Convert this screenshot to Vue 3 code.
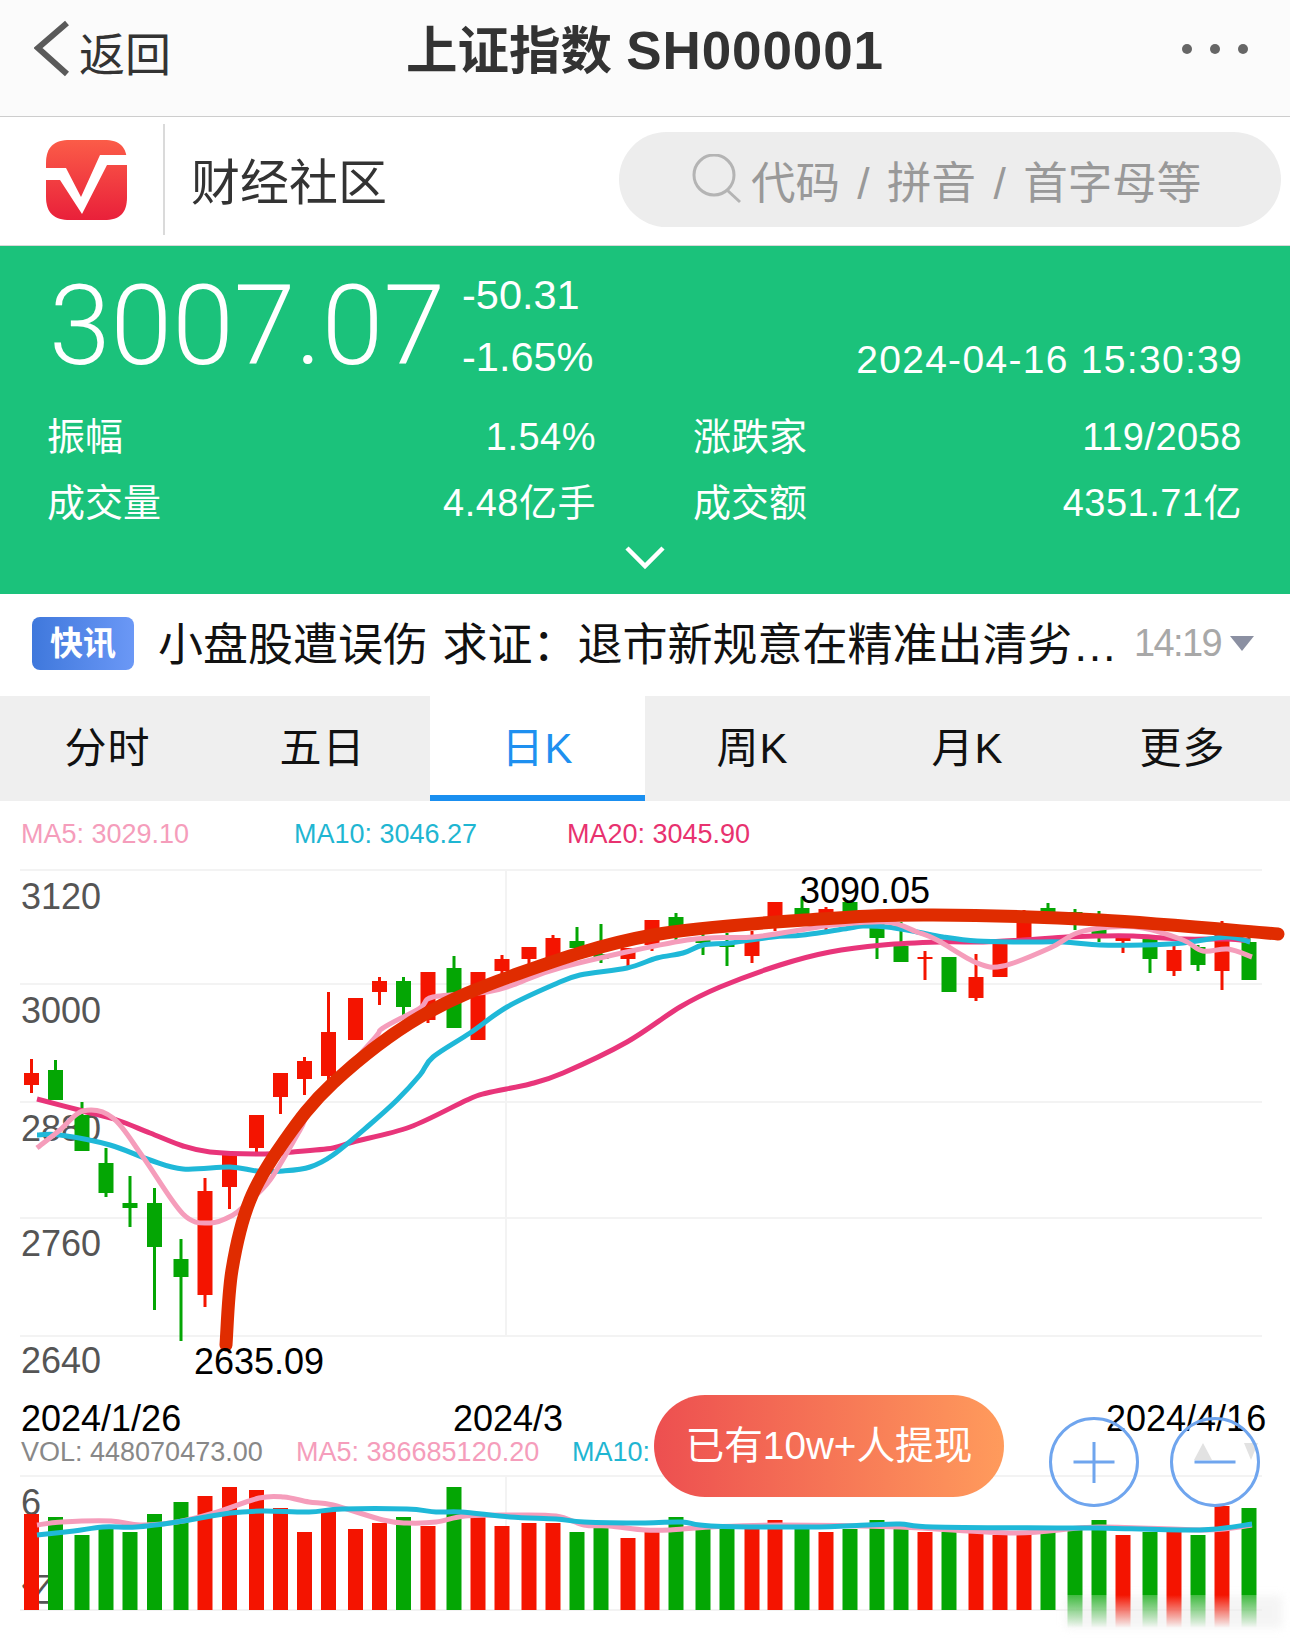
<template>
  <div class="page">
    <header class="nav">
      <div class="nav-side back">
        <svg width="36" height="60" viewBox="0 0 36 60" fill="none">
          <path d="M33 4L4 29l29 26" stroke="#5a5a5a" stroke-width="6"/>
        </svg>
        <span>返回</span>
      </div>
      <div class="nav-title">上证指数 <span class="code">SH000001</span></div>
      <div class="nav-side more"><i></i><i></i><i></i></div>
    </header>

    <div class="community">
      <svg class="logo" width="82" height="81" viewBox="46 140 82 81">
        <defs>
          <linearGradient id="logoFill" x1="0" y1="0" x2="0" y2="1">
            <stop offset="0" stop-color="#fb5c48"/>
            <stop offset="1" stop-color="#e9203a"/>
          </linearGradient>
        </defs>
        <path d="M70 140h34c16 0 23 7 23 23v34c0 16-7 23-23 23H70c-16 0-24-7-24-23v-34c0-16 8-23 24-23z" fill="url(#logoFill)"/>
        <path d="M46 168h20l15 29 19-42h27v10h-20l-25 49-22-34H46z" fill="#fff"/>
      </svg>
      <div class="divider"></div>
      <div class="community-name">财经社区</div>
      <div class="search">
        <svg width="50" height="50" viewBox="0 0 50 50" fill="none">
          <circle cx="22" cy="21" r="20" stroke="#b4b4b4" stroke-width="3"/>
          <path d="M35 36l13 12" stroke="#b4b4b4" stroke-width="3"/>
        </svg>
        <span>代码 / 拼音 / 首字母等</span>
      </div>
    </div>

    <section class="quote">
      <div class="quote-top">
        <div class="price">3007.07</div>
        <div class="change">
          <div>-50.31</div>
          <div>-1.65%</div>
        </div>
        <div class="time">2024-04-16 15:30:39</div>
      </div>
      <div class="stats">
        <div v-for="s in stats" :key="s.label" class="stat">
          <span>{{ s.label }}</span>
          <span class="stat-value">{{ s.value }}</span>
        </div>
      </div>
      <svg class="chevron" width="40" height="24" viewBox="0 0 40 24" fill="none">
        <path d="M2 2l18 18L38 2" stroke="#fff" stroke-width="4.5"/>
      </svg>
    </section>

    <div class="news">
      <span class="news-tag">快讯</span>
      <span class="news-text">小盘股遭误伤 求证：退市新规意在精准出清劣…</span>
      <span class="news-time">14:19</span>
      <i class="news-arrow"></i>
    </div>

    <nav class="tabs">
      <div v-for="t in tabs" :key="t" class="tab" :class="{ active: t === '日K' }">{{ t }}</div>
    </nav>

    <svg class="chart" width="1290" height="842" viewBox="0 801 1290 842">
      <defs>
        <linearGradient id="fadeRed" x1="0" y1="0" x2="0" y2="1">
          <stop offset="0" stop-color="#f41400"/>
          <stop offset="1" stop-color="#f41400" stop-opacity="0"/>
        </linearGradient>
        <linearGradient id="fadeGreen" x1="0" y1="0" x2="0" y2="1">
          <stop offset="0" stop-color="#04a604" stop-opacity=".75"/>
          <stop offset="1" stop-color="#04a604" stop-opacity="0"/>
        </linearGradient>
        <filter id="haze" x="-10%" y="-50%" width="120%" height="200%">
          <feGaussianBlur stdDeviation="4"/>
        </filter>
      </defs>

      <text class="ma" x="21" y="843" fill="#f59dbb">MA5: 3029.10</text>
      <text class="ma" x="294" y="843" fill="#1fb6d2">MA10: 3046.27</text>
      <text class="ma" x="567" y="843" fill="#e8326f">MA20: 3045.90</text>

      <!-- grid -->
      <path v-for="y in gridY" :key="y" :d="`M20 ${y}H1262`" stroke="#f3f3f3" stroke-width="2"/>
      <path d="M506 870V1336M506 1476V1610" stroke="#f3f3f3" stroke-width="2"/>

      <text v-for="a in axis" :key="a.t" class="axis" x="21" :y="a.y">{{ a.t }}</text>

      <!-- candles -->
      <g v-for="c in candles" :key="c.x" :fill="c.up ? '#f41400' : '#04a604'">
        <rect :x="c.x - 1.5" :y="c.hi" width="3" :height="c.lo - c.hi"/>
        <rect :x="c.x - 7.5" :y="c.top" width="15" :height="c.bot - c.top"/>
      </g>

      <path :d="ma20" class="line" stroke="#e8357a"/>
      <path :d="ma10" class="line" stroke="#1fb8d8"/>
      <path :d="ma5" class="line" stroke="#f59dbb"/>
      <path :d="arc" fill="none" stroke="#e02c00" stroke-width="13" stroke-linecap="round"/>

      <text class="mark" x="800" y="903">3090.05</text>
      <text class="mark" x="194" y="1374">2635.09</text>
      <text class="mark" x="21" y="1431">2024/1/26</text>
      <text class="mark" x="453" y="1431">2024/3</text>
      <text class="mark" x="1106" y="1431">2024/4/16</text>

      <text class="ma" x="21" y="1461" fill="#888">VOL: 448070473.00</text>
      <text class="ma" x="296" y="1461" fill="#f59dbb">MA5: 386685120.20</text>
      <text class="ma" x="572" y="1461" fill="#1fb6d2">MA10:</text>

      <text class="axis" x="21" y="1515">6</text>
      <text class="axis" x="21" y="1602">亿</text>

      <!-- volume -->
      <rect x="1066" y="1596" width="216" height="32" fill="#ececec" opacity=".55" filter="url(#haze)"/>
      <g v-for="b in bars" :key="b.x">
        <rect :x="b.x - 7.5" :y="b.top" width="15" :height="b.fade ? 1595 - b.top : 1610 - b.top" :fill="b.up ? '#f41400' : '#04a604'"/>
        <rect v-if="b.fade" :x="b.x - 7.5" y="1595" width="15" height="33" :fill="b.up ? 'url(#fadeRed)' : 'url(#fadeGreen)'"/>
      </g>
      <path :d="volMa5" class="line" stroke="#f59dbb"/>
      <path :d="volMa10" class="line" stroke="#1fb8d8"/>

      <!-- zoom buttons, sort arrows under the minus ring -->
      <path d="M1203 1443l9 17h-18zM1244 1443h14l-7 17z" fill="#e2e2e2"/>
      <g fill="none" stroke="#6fa5ee" stroke-width="3">
        <circle cx="1094" cy="1462" r="43.5"/>
        <circle cx="1215" cy="1462" r="43.5"/>
        <path d="M1073.500 1462h41M1094 1442v41M1194.500 1462h41"/>
      </g>
    </svg>

    <div class="withdraw">已有10w+人提现</div>
  </div>
</template>

<script setup>
const stats = [
  { label: '振幅', value: '1.54%' },
  { label: '涨跌家', value: '119/2058' },
  { label: '成交量', value: '4.48亿手' },
  { label: '成交额', value: '4351.71亿' },
]
const tabs = ['分时', '五日', '日K', '周K', '月K', '更多']

const gridY = [870, 984, 1102, 1218, 1336, 1476, 1610]
const axis = [
  { t: '3120', y: 909 },
  { t: '3000', y: 1023 },
  { t: '2880', y: 1141 },
  { t: '2760', y: 1256 },
  { t: '2640', y: 1373 },
]

// x, wick top, body top, body bottom, wick bottom, up, volume top
const raw = [
  [31.5, 1059, 1073, 1085, 1093, 1, 1514],
  [55.5, 1060, 1070, 1100, 1100, 0, 1517],
  [82, 1102, 1115, 1151, 1151, 0, 1535],
  [106, 1148, 1163, 1193, 1197, 0, 1527],
  [130, 1176, 1203, 1208, 1227, 0, 1532],
  [154.5, 1188, 1203, 1247, 1310, 0, 1514],
  [181, 1239, 1259, 1277, 1341, 0, 1502],
  [205, 1178, 1191, 1295, 1307, 1, 1496],
  [229.5, 1152, 1152, 1187, 1209, 1, 1487],
  [256.5, 1115, 1115, 1148, 1153, 1, 1490],
  [280.5, 1073, 1073, 1097, 1114, 1, 1508],
  [304.5, 1057, 1061, 1079, 1095, 1, 1532],
  [328.5, 992, 1032, 1076, 1085, 1, 1511],
  [355.5, 998, 998, 1040, 1040, 1, 1529],
  [379.5, 977, 981, 992, 1005, 1, 1523],
  [403.5, 977, 981, 1007, 1017, 0, 1517],
  [428, 972, 972, 1020, 1023, 1, 1526],
  [454, 956, 968, 1028, 1028, 0, 1487],
  [478, 972, 972, 1040, 1040, 1, 1517],
  [502, 955, 959, 971, 975, 1, 1526],
  [529, 947, 947, 959, 967, 1, 1523],
  [553, 935, 938, 960, 960, 1, 1523],
  [577, 927, 941, 948, 950, 0, 1532],
  [601, 924, 954, 959, 963, 0, 1527],
  [628, 948, 948, 959, 966, 1, 1538],
  [652, 920, 920, 945, 951, 1, 1532],
  [676, 913, 917, 930, 941, 0, 1517],
  [703, 933, 937, 943, 955, 0, 1529],
  [727, 933, 944, 947, 966, 0, 1529],
  [752, 931, 937, 956, 963, 1, 1529],
  [775, 902, 902, 928, 931, 1, 1520],
  [802, 897, 908, 922, 922, 0, 1523],
  [826, 907, 909, 927, 930, 1, 1532],
  [850, 902, 902, 925, 925, 0, 1529],
  [877, 915, 915, 938, 959, 0, 1520],
  [901, 922, 946, 962, 962, 0, 1527],
  [925, 951, 957, 959, 980, 1, 1532],
  [949, 957, 957, 992, 992, 0, 1532],
  [976, 954, 977, 998, 1001, 1, 1532],
  [1000, 944, 944, 977, 977, 1, 1535],
  [1024, 910, 918, 938, 938, 1, 1532],
  [1048, 903, 908, 920, 923, 0, 1527],
  [1075, 909, 912, 922, 930, 0, 1530],
  [1099, 911, 928, 936, 942, 0, 1520],
  [1123, 935, 938, 941, 953, 1, 1535],
  [1150, 938, 938, 959, 973, 0, 1532],
  [1174, 945, 950, 971, 976, 1, 1532],
  [1198, 945, 947, 965, 971, 0, 1535],
  [1222, 921, 934, 971, 990, 1, 1506],
  [1249, 937, 942, 980, 980, 0, 1508],
]
const candles = raw.map(([x, hi, top, bot, lo, up]) => ({ x, hi, top, bot, lo, up }))
const bars = raw.map((r) => ({ x: r[0], up: r[5], top: r[6], fade: r[0] >= 1075 }))

// catmull-rom through the traced points
function smooth(pts) {
  let d = `M${pts[0][0]} ${pts[0][1]}`
  for (let i = 0; i < pts.length - 1; i++) {
    const p0 = pts[i - 1] || pts[i]
    const p1 = pts[i]
    const p2 = pts[i + 1]
    const p3 = pts[i + 2] || p2
    const c1x = p1[0] + (p2[0] - p0[0]) / 6
    const c1y = p1[1] + (p2[1] - p0[1]) / 6
    const c2x = p2[0] - (p3[0] - p1[0]) / 6
    const c2y = p2[1] - (p3[1] - p1[1]) / 6
    d += `C${c1x.toFixed(1)} ${c1y.toFixed(1)} ${c2x.toFixed(1)} ${c2y.toFixed(1)} ${p2[0]} ${p2[1]}`
  }
  return d
}

const arc = smooth([
  [226, 1345], [232, 1270], [250, 1200], [283, 1143], [333, 1083], [420, 1017],
  [520, 973], [653, 935], [820, 919], [933, 915], [1100, 920], [1278, 934],
])
const ma5 = smooth([
  [37, 1148], [60, 1130], [83, 1111], [113, 1118], [143, 1157], [183, 1214], [210, 1223],
  [233, 1215], [245, 1205], [270, 1180], [300, 1130], [313, 1107], [373, 1040], [383, 1028],
  [420, 1008], [433, 997], [487, 992], [513, 985], [563, 967], [687, 940], [753, 937],
  [813, 928], [833, 925], [887, 922], [917, 932], [937, 940], [977, 963], [1003, 966],
  [1050, 948], [1077, 933], [1110, 927], [1143, 928], [1183, 940], [1203, 951], [1228, 949], [1252, 957],
])
const ma10 = smooth([
  [37, 1135], [60, 1135], [110, 1145], [150, 1160], [183, 1169], [230, 1167], [257, 1171],
  [283, 1171], [310, 1167], [333, 1155], [367, 1127], [397, 1100], [420, 1075], [433, 1057],
  [470, 1033], [507, 1007], [553, 985], [580, 975], [627, 968], [657, 958], [683, 953],
  [703, 945], [730, 943], [773, 937], [803, 935], [850, 928], [863, 926], [887, 927],
  [917, 932], [943, 937], [977, 941], [1023, 942], [1063, 942], [1100, 945], [1143, 945],
  [1183, 943], [1227, 937], [1250, 942],
])
const ma20 = smooth([
  [37, 1099], [83, 1111], [117, 1120], [150, 1133], [183, 1146], [210, 1152], [260, 1154],
  [293, 1152], [333, 1148], [353, 1142], [410, 1127], [467, 1100], [487, 1093], [530, 1084],
  [563, 1073], [627, 1042], [680, 1007], [720, 987], [780, 965], [830, 952], [883, 945],
  [940, 942], [983, 942], [1023, 940], [1067, 937], [1100, 936], [1133, 936], [1183, 939],
  [1227, 939], [1250, 941],
])
const volMa5 = smooth([
  [37, 1525], [62, 1522], [111, 1521], [140, 1525], [177, 1522], [214, 1513], [259, 1498],
  [284, 1497], [309, 1502], [333, 1505], [383, 1520], [407, 1523], [436, 1522], [465, 1516],
  [510, 1515], [556, 1516], [584, 1525], [609, 1526], [645, 1530], [670, 1530], [711, 1527],
  [781, 1525], [900, 1527], [1015, 1533], [1098, 1527], [1205, 1530], [1252, 1525],
])
const volMa10 = smooth([
  [37, 1535], [74, 1531], [103, 1527], [136, 1527], [177, 1522], [230, 1513], [263, 1511],
  [309, 1512], [342, 1509], [407, 1509], [436, 1512], [461, 1512], [510, 1517], [556, 1519],
  [584, 1522], [645, 1523], [682, 1522], [711, 1526], [810, 1527], [867, 1525], [900, 1524],
  [933, 1527], [1057, 1528], [1098, 1528], [1200, 1530], [1252, 1524],
])
</script>

<style scoped>
.page {
  position: relative;
  width: 1290px;
  height: 1643px;
  overflow: hidden;
  background: #fff;
  font-family: "Liberation Sans", "Noto Sans CJK SC", sans-serif;
}

/* Nav */
.nav {
  display: flex;
  align-items: center;
  height: 117px;
  padding-bottom: 18px;
  box-sizing: border-box;
  background: #fbfbfb;
  border-bottom: 1px solid #cdcdcd;
}

.nav-side {
  width: 300px;
  flex-shrink: 0;
  display: flex;
  align-items: center;
}

.back {
  padding-left: 34px;
  box-sizing: border-box;
  gap: 9px;
  font-size: 46px;
  color: #333;
}

.back span {
  margin-top: 4px;
}

.nav-title {
  flex: 1;
  margin-bottom: 5px;
  text-align: center;
  font-size: 51.500px;
  font-weight: 700;
  color: #333;
}

.code {
  font-size: 53px;
  letter-spacing: 0.9px;
}

.more {
  justify-content: flex-end;
  gap: 18px;
  padding-right: 42px;
  box-sizing: border-box;
}

.more i {
  width: 10px;
  height: 10px;
  border-radius: 50%;
  background: #666;
}

/* Community bar */
.community {
  display: flex;
  align-items: center;
  height: 129px;
  padding: 0 0 4px 46px;
  border-bottom: 1px solid #d8d8d8;
  box-sizing: border-box;
}

.logo {
  flex-shrink: 0;
  margin-top: 3px;
}

.divider {
  width: 2px;
  height: 111px;
  margin: 0 26px 0 35px;
  background: #dadada;
}

.community-name {
  font-size: 49px;
  color: #333;
  width: 428px;
  margin-bottom: 2px;
}

.search {
  display: flex;
  align-items: center;
  width: 662px;
  height: 95px;
  padding-left: 73px;
  box-sizing: border-box;
  gap: 9px;
  border-radius: 48px;
  background: #ededed;
  font-size: 44.500px;
  color: #999;
  word-spacing: 5px;
}

/* Quote */
.quote {
  height: 348px;
  padding: 18px 47px 0 47px;
  box-sizing: border-box;
  background: #1bc27b;
  color: #fff;
  display: flex;
  flex-direction: column;
}

.quote-top {
  display: flex;
  height: 124px;
}

.price {
  width: 392px;
  margin-left: 2px;
  font-family: Roboto, "Liberation Sans", sans-serif;
  font-size: 111px;
  font-weight: 300;
  line-height: 124px;
  white-space: nowrap;
}

.change {
  margin-left: 21px;
  font-size: 41.500px;
  line-height: 62px;
}

.time {
  margin-left: auto;
  align-self: flex-end;
  position: relative;
  top: 3px;
  font-size: 39px;
  line-height: 62px;
  letter-spacing: 1.3px;
}

.stats {
  display: grid;
  grid-template-columns: 549px 549px;
  column-gap: 97px;
  margin-top: 16px;
}

.stat {
  display: flex;
  justify-content: space-between;
  font-size: 38px;
  line-height: 66px;
}

.stat-value {
  letter-spacing: 0.5px;
}

.chevron {
  align-self: center;
  margin: 10px 0 0 0;
}

/* News */
.news {
  display: flex;
  align-items: center;
  height: 102px;
  padding: 0 35px 4px 32px;
  box-sizing: border-box;
}

.news-tag {
  width: 102px;
  height: 53px;
  border-radius: 8px;
  background: linear-gradient(90deg, #3f78dc, #6b98f6);
  color: #fff;
  font-size: 33px;
  font-weight: 700;
  line-height: 53px;
  text-align: center;
}

.news-text {
  margin: 0 0 4px 24px;
  width: 976px;
  font-size: 45px;
  color: #111;
  white-space: nowrap;
  word-spacing: 2px;
}

.news-time {
  font-size: 38px;
  letter-spacing: -1.6px;
  color: #a8a8a8;
}

.news-arrow {
  margin-left: 9px;
  width: 0;
  height: 0;
  border-left: 12px solid transparent;
  border-right: 12px solid transparent;
  border-top: 15px solid #8b90a2;
}

/* Tabs */
.tabs {
  display: grid;
  grid-template-columns: repeat(6, 215px);
  height: 105px;
  background: #efefef;
}

.tab {
  display: flex;
  align-items: center;
  justify-content: center;
  padding-bottom: 8px;
  box-sizing: border-box;
  font-size: 42px;
  letter-spacing: 1px;
  color: #111;
}

.tab.active {
  background: #fff;
  color: #1e90f0;
  border-bottom: 6px solid #1a8ff0;
  padding-bottom: 2px;
}

/* Chart */
.chart {
  display: block;
}

.ma {
  font-size: 27px;
}

.axis {
  font-size: 36px;
  fill: #555;
}

.mark {
  font-size: 36px;
  fill: #000;
}

.line {
  fill: none;
  stroke-width: 5;
  stroke-linejoin: round;
}

.withdraw {
  position: absolute;
  left: 654px;
  top: 1395px;
  width: 350px;
  height: 102px;
  border-radius: 51px;
  background: linear-gradient(90deg, #ed4f50, #ff9b5c);
  color: #fff;
  font-size: 38.700px;
  line-height: 102px;
  text-align: center;
}
</style>
